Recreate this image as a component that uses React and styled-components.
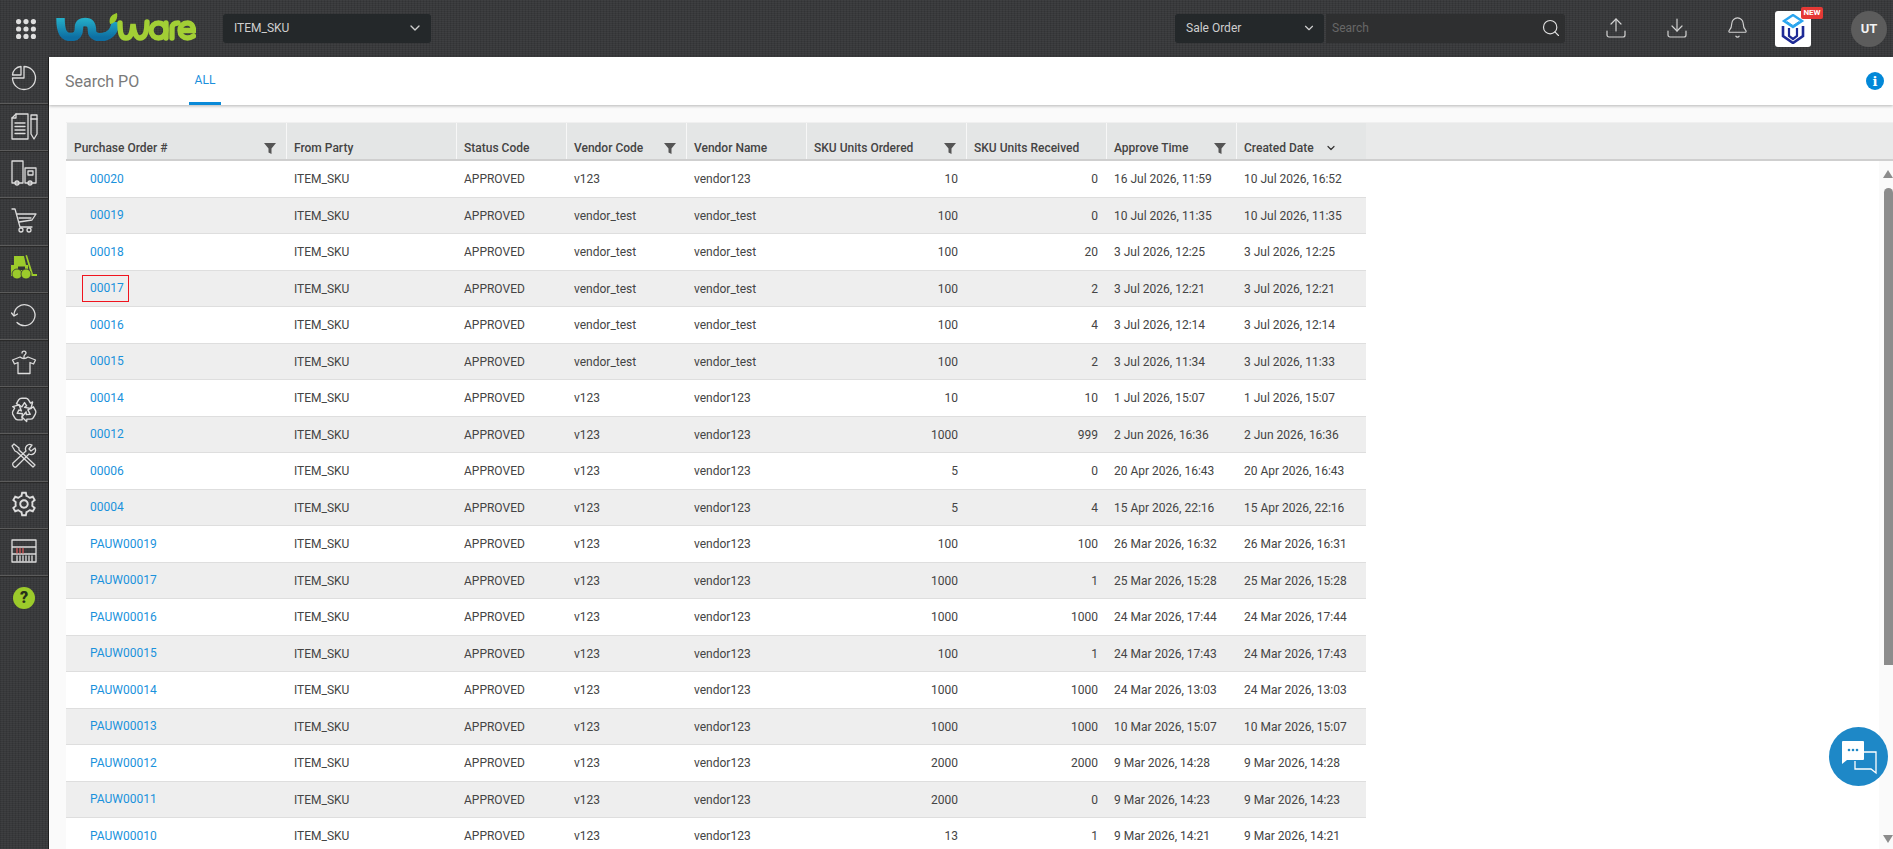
import React from 'react';
import styled, { createGlobalStyle } from 'styled-components';
import { Upload, Download, Bell, Search, ChevronDown } from 'lucide-react';
import { LiaCogSolid } from 'react-icons/lia';

const Global = createGlobalStyle`
  html, body { margin: 0; padding: 0; height: 100%; overflow: hidden; background: #fff; }
  * { box-sizing: border-box; }
  body { font-family: Roboto, "Liberation Sans", sans-serif; font-size: 12px; color: #444; }
`;

const texture = `
  background-color: #38393b;
  background-image:
    repeating-linear-gradient(0deg, rgba(255,255,255,.03) 0 1px, transparent 1px 2px),
    repeating-linear-gradient(90deg, rgba(0,0,0,.1) 0 1px, transparent 1px 3px);
`;

const Page = styled.div`
  width: 1893px; height: 849px; overflow: hidden;
  display: flex; flex-direction: column; position: relative;
`;
const TopBar = styled.header`
  ${texture}
  height: 57px; flex: none; display: flex; align-items: center; padding: 0 6px 0 16px;
`;
const AppsButton = styled.div` width: 20px; height: 20px; display: flex; margin-right: 20px; `;
const LogoWrap = styled.div` width: 140px; height: 28px; margin: 0 27px 3px 0; display: flex; `;
const Select = styled.div`
  height: 29px; background: #24282a; border-radius: 3px; color: #cfcfcf; margin-bottom: 1px;
  display: flex; align-items: center; justify-content: space-between;
  width: ${p => p.$w}px; padding: 0 8px 0 11px; font-size: 12px;
`;
const Spacer = styled.div` flex: 1; `;
const SearchBox = styled.div`
  width: 239px; height: 29px; margin: 0 20px 1px 2px; background: #2e2f30; border-radius: 0 3px 3px 0;
  display: flex; align-items: center; justify-content: space-between;
  padding: 0 4px 0 6px; color: #676767; font-size: 12px;
`;
const IconButton = styled.div`
  width: 61px; height: 40px; margin-bottom: 2px; display: flex; align-items: center; justify-content: center; color: #d2d2d2;
`;
const BrandTile = styled.div`
  width: 36px; height: 36px; margin-left: 7px; background: #fff; border-radius: 3px;
  position: relative; display: flex; align-items: center; justify-content: center;
`;
const NewBadge = styled.span`
  position: absolute; top: -4px; left: 26px; width: 22px; height: 12px; background: #e53935; border-radius: 2px;
  color: #fff; font-size: 8px; font-weight: 700; display: flex; align-items: center; justify-content: center;
`;
const Avatar = styled.div`
  width: 36px; height: 36px; margin-left: 40px; border-radius: 50%; background: #5c5c5c; color: #f2f2f2;
  font-size: 13px; font-weight: 700; display: flex; align-items: center; justify-content: center;
`;
const Body = styled.div` flex: 1; display: flex; min-height: 0; `;
const Sidebar = styled.nav`
  ${texture}
  width: 49px; flex: none; border-right: 1px solid #1f1f1f;
`;
const SideItem = styled.div`
  height: 47.2px; display: flex; align-items: center; justify-content: center; color: #dcdcdc; padding-bottom: 2px;
  & + & { border-top: 1px solid #5b5b5b; box-shadow: inset 0 1px 0 #2a2a2a; }
  &:first-child { height: 46px; padding-bottom: 5px; }
`;
const HelpDot = styled.span`
  width: 22px; height: 22px; border-radius: 50%; background: #9ccb2b; color: #26301a;
  font-size: 16px; font-weight: 900; display: flex; align-items: center; justify-content: center;
`;
const Main = styled.main` flex: 1; min-width: 0; display: flex; flex-direction: column; background: #fafafa; `;
const TabBar = styled.div`
  height: 48px; flex: none; background: #fff; display: flex; align-items: stretch; padding: 0 9px 0 16px;
  box-shadow: 0 1px 3px rgba(0,0,0,.28); position: relative;
`;
const PageTitle = styled.div`
  font-size: 16px; color: #7a7a7a; display: flex; align-items: center; width: 124px;
`;
const Tab = styled.div`
  width: 32px; display: flex; justify-content: center; align-items: center; padding-top: 1px;
  font-size: 12px; color: #1b8fdc; border-bottom: 3px solid #0a8ad8;
`;
const InfoDot = styled.div`
  margin-left: auto; align-self: center; width: 18px; height: 18px; border-radius: 50%; background: #0288d8;
  color: #fff; font-size: 13px; font-weight: 700; font-family: "DejaVu Serif", serif;
  display: flex; align-items: center; justify-content: center;
`;
const Content = styled.div` flex: 1; min-height: 0; padding-top: 17px; display: flex; flex-direction: column; `;
const HeadBand = styled.div`
  margin-left: 17px; height: 39px; flex: none; background: #e9eaea; border-top: 1px solid #f0f0f0;
  border-bottom: 2px solid #cfcfcf;
`;
const columns = '220px 170px 110px 120px 120px 160px 140px 130px 130px';
const HeadRow = styled.div` display: grid; grid-template-columns: ${columns}; width: 1300px; height: 100%; `;
const HeadCell = styled.div`
  background: #e4e6e6; border-left: 1.5px solid #f7f7f7; padding: 14px ${p => p.$right || 8}px 0 7px;
  display: flex; align-items: center; justify-content: ${p => p.$gap ? 'flex-start' : 'space-between'}; gap: ${p => p.$gap || 0}px;
  font-weight: 500; color: #444;
`;
const SortMark = styled(ChevronDown)` color: #333; `;
const BodyWrap = styled.div` flex: 1; min-height: 0; display: flex; background: #fff; margin-left: 17px; overflow: hidden; `;
const RowList = styled.div` flex: 1; min-width: 0; `;
const Row = styled.div`
  display: grid; grid-template-columns: ${columns}; width: 1300px; height: 36.5px; align-items: center; padding-top: 1px;
  background: ${p => p.$alt ? '#eeeeee' : '#fff'}; border-bottom: 1px solid #dedede; color: #444;
`;
const Cell = styled.div`
  padding: 0 8px; text-align: ${p => p.$num ? 'right' : 'left'}; white-space: nowrap;
`;
const LinkCell = styled.div` padding-left: 16px; display: flex; `;
const PoLink = styled.a`
  color: #1a92dc; height: 27px;
  padding: ${p => p.$boxed ? '0 4px 0 7px' : '0 8px'};
  line-height: ${p => p.$boxed ? '25px' : '27px'};
  border: ${p => p.$boxed ? '1px solid #f0141e' : '0'};
`;
const Rail = styled.div`
  width: 14px; flex: none; background: #fafafa; display: flex; flex-direction: column; align-items: flex-end;
  height: 688px; padding-top: 9px;
`;
const ArrowIcon = styled.svg` display: block; flex: none; margin-top: ${p => p.$top || 0}px; `;
const Thumb = styled.div` width: 9px; height: 477px; margin-top: 10px; background: #8c8c8c; border-radius: 5px 5px 0 0; flex: none; `;
const ChatBubble = styled.div`
  position: absolute; left: 1829px; top: 727px; width: 59px; height: 59px; border-radius: 50%; background: #1e88c7;
  display: flex; align-items: center; justify-content: center;
`;

const Grid = () => (
  <svg width="20" height="20" viewBox="0 0 20 20" fill="#dedede">
    {[2.6, 10, 17.4].flatMap(y => [2.6, 10, 17.4].map(x => <circle key={x + '-' + y} cx={x} cy={y} r="2.6" />))}
  </svg>
);
const Logo = () => (
  <svg width="140" height="28" viewBox="0 0 140 28" fill="none">
    <defs>
      <linearGradient id="lg" x1="0" y1="0" x2="0" y2="1">
        <stop offset="0" stopColor="#25b0c9" />
        <stop offset="1" stopColor="#0e6fa3" />
      </linearGradient>
    </defs>
    <path d="M4.500 5C4.500 20 8 24 15 24C22 24 23 19 23 14C23 10 26 9 29 9C35 9 36 13 36 18C36 23 42 25 47 24C54 23 58 19 60 9" stroke="url(#lg)" strokeWidth="8.500" />
    <path d="M54 11C52 4 57 1 61 0C62 5 60 10 54 11Z" fill="#9ccb2b" />
    <g stroke="#a2cf35" strokeWidth="5.400" strokeLinecap="round">
      <path d="M64 10C64 20 65 25 70 25C75 25 76 20 77 11C78 20 80 25 84 25C89 25 91 20 91 9" />
      <circle cx="102.500" cy="17.500" r="7.500" />
      <path d="M110 10V25" />
      <path d="M116 25V15C116 12 118 10 122 10" />
      <path d="M125 17.500H137.500C137.500 13 135 10 131.500 10C127 10 124 13 124 17.500C124 22 127 25 131.500 25C134 25 136 24 137.500 23" />
    </g>
  </svg>
);
const Brand = () => (
  <svg width="26" height="30" viewBox="0 0 26 30" fill="none">
    <path d="M13 1L22 7L13 13L4 7Z" stroke="#2ba5ef" strokeWidth="2.400" />
    <path d="M7 7.500L13 11.500L19 7.500" stroke="#2ba5ef" strokeWidth="1" />
    <path d="M3 12V22L13 29L23 22V12" stroke="#1e2a96" strokeWidth="2.600" />
    <path d="M9 14V22L13 25L17 22V14" stroke="#1e2a96" strokeWidth="2.200" />
  </svg>
);
const Funnel = () => (
  <svg width="12" height="12" viewBox="0 0 12 12" fill="#555"><path d="M0 1h12L7.500 6.500V12l-3-1.500v-4z" /></svg>
);

const stroke = { fill: 'none', stroke: 'currentColor', strokeWidth: 1.3, strokeLinejoin: 'round', strokeLinecap: 'round' };
const Pie = () => (
  <svg width="26" height="26" viewBox="0 0 26 26" {...stroke}>
    <path d="M13 1.500A11.500 11.500 0 1 1 1.500 13H13Z" />
    <path d="M10 1.500V10H1.500A9 9 0 0 1 10 1.500Z" />
  </svg>
);
const Docs = () => (
  <svg width="27" height="27" viewBox="0 0 27 27" {...stroke}>
    <path d="M5 1H17V26H1V5Z" /><path d="M5 1V5H1" /><path d="M4 10H14M4 13.500H14M4 17H14M4 20.500H14" />
    <path d="M20 2H26V21L23 26L20 21Z" /><path d="M20 6H26" />
  </svg>
);
const Truck = () => (
  <svg width="26" height="26" viewBox="0 0 26 26" {...stroke}>
    <path d="M1 1H12V23H1Z" /><path d="M14 8H25V23H14Z" /><path d="M17 11H22V15H17Z" />
    <circle cx="6" cy="23" r="2" /><circle cx="19" cy="23" r="2" />
  </svg>
);
const Cart = () => (
  <svg width="26" height="26" viewBox="0 0 26 26" {...stroke}>
    <path d="M1 2H4L9 20H21" /><path d="M6 7H25L21 13L8 15" /><path d="M8 11H20" /><circle cx="10" cy="23" r="2" /><circle cx="18" cy="23" r="2" />
  </svg>
);
const Forklift = () => (
  <svg width="26" height="25" viewBox="0 0 26 25" fill="#9ccb2b">
    <path d="M3 1H13L15 10H17V21H0V10H3Z" />
    <path d="M16 0L22 19H26V21H20.500L14.500 0.500Z" />
    <path d="M7 11.500H14V15H7Z" fill="#343536" />
    <circle cx="6" cy="19" r="5" stroke="#343536" strokeWidth=".8" /><circle cx="15" cy="19" r="5" stroke="#343536" strokeWidth=".8" />
  </svg>
);
const Returns = () => (
  <svg width="26" height="26" viewBox="0 0 26 26" {...stroke}>
    <path d="M3 13A10.500 10.500 0 1 1 6 20.500" />
    <path d="M0.500 11L3 14L6.500 12" />
  </svg>
);
const Hanger = () => (
  <svg width="26" height="26" viewBox="0 0 26 26" {...stroke}>
    <path d="M11 4C11 1.500 15 1.500 15 4C15 5.500 13 5.500 13 7.500V9" />
    <path d="M9 8L1.500 11L3.500 15L7 13.500V24.500H19V13.500L22.500 15L24.500 11L17 8Q13 11 9 8Z" />
  </svg>
);
const recycleArm = 'M8 4.500Q9 3 11 3H15Q16.500 3 17.500 5L19 7.500L21 6.500L19.500 12.500L13.500 11.500L15.500 10L13.500 7L11 11L6 8Z';
const RecycleMark = () => (
  <svg width="28" height="28" viewBox="0 0 26 26" {...stroke}>
    <path d={recycleArm} />
    <path d={recycleArm} transform="rotate(120 13 14)" />
    <path d={recycleArm} transform="rotate(240 13 14)" />
  </svg>
);
const Tools = () => (
  <svg width="26" height="26" viewBox="0 0 26 26" {...stroke}>
    <path d="M1 3L3 1L8 5L8 7L24 22L22 24L6 9L4 8Z" />
    <path d="M24 5L20 8L18 6L21 2C17 0 13 4 15 8L2 20C1 22 3 25 5 24L18 11C22 13 26 9 24 5Z" />
  </svg>
);
const Shelf = () => (
  <svg width="26" height="24" viewBox="0 0 26 24" {...stroke}>
    <path d="M1 1H25V23H1ZM1 8H25M1 15H25" />
    <path d="M6 9.500V14M9 9.500V14M12 9.500V14" stroke="#d85a5a" /><path d="M6 17V22M9 17V22M12 17V22M15 17V22M18 17V22M21 17V22" />
  </svg>
);
const Chat = () => (
  <svg width="40" height="38" viewBox="0 0 40 38" fill="none">
    <path d="M25 14H37V35L32 31H16V23" stroke="#fff" strokeWidth="1.300" />
    <path d="M4 3H24Q25 3 25 4V21Q25 22 24 22H8L3 26V4Q3 3 4 3Z" fill="#fff" />
    <circle cx="10" cy="12" r="1.300" fill="#1e88c7" /><circle cx="14" cy="12" r="1.300" fill="#1e88c7" /><circle cx="18" cy="12" r="1.300" fill="#1e88c7" />
  </svg>
);

const d = (a, b) => [a, b];
const rows = [
  ['00020', 'v123', 'vendor123', 10, 0, ...d('16 Jul 2026, 11:59', '10 Jul 2026, 16:52')],
  ['00019', 'vendor_test', 'vendor_test', 100, 0, ...d('10 Jul 2026, 11:35', '10 Jul 2026, 11:35')],
  ['00018', 'vendor_test', 'vendor_test', 100, 20, ...d('3 Jul 2026, 12:25', '3 Jul 2026, 12:25')],
  ['00017', 'vendor_test', 'vendor_test', 100, 2, ...d('3 Jul 2026, 12:21', '3 Jul 2026, 12:21')],
  ['00016', 'vendor_test', 'vendor_test', 100, 4, ...d('3 Jul 2026, 12:14', '3 Jul 2026, 12:14')],
  ['00015', 'vendor_test', 'vendor_test', 100, 2, ...d('3 Jul 2026, 11:34', '3 Jul 2026, 11:33')],
  ['00014', 'v123', 'vendor123', 10, 10, ...d('1 Jul 2026, 15:07', '1 Jul 2026, 15:07')],
  ['00012', 'v123', 'vendor123', 1000, 999, ...d('2 Jun 2026, 16:36', '2 Jun 2026, 16:36')],
  ['00006', 'v123', 'vendor123', 5, 0, ...d('20 Apr 2026, 16:43', '20 Apr 2026, 16:43')],
  ['00004', 'v123', 'vendor123', 5, 4, ...d('15 Apr 2026, 22:16', '15 Apr 2026, 22:16')],
  ['PAUW00019', 'v123', 'vendor123', 100, 100, ...d('26 Mar 2026, 16:32', '26 Mar 2026, 16:31')],
  ['PAUW00017', 'v123', 'vendor123', 1000, 1, ...d('25 Mar 2026, 15:28', '25 Mar 2026, 15:28')],
  ['PAUW00016', 'v123', 'vendor123', 1000, 1000, ...d('24 Mar 2026, 17:44', '24 Mar 2026, 17:44')],
  ['PAUW00015', 'v123', 'vendor123', 100, 1, ...d('24 Mar 2026, 17:43', '24 Mar 2026, 17:43')],
  ['PAUW00014', 'v123', 'vendor123', 1000, 1000, ...d('24 Mar 2026, 13:03', '24 Mar 2026, 13:03')],
  ['PAUW00013', 'v123', 'vendor123', 1000, 1000, ...d('10 Mar 2026, 15:07', '10 Mar 2026, 15:07')],
  ['PAUW00012', 'v123', 'vendor123', 2000, 2000, ...d('9 Mar 2026, 14:28', '9 Mar 2026, 14:28')],
  ['PAUW00011', 'v123', 'vendor123', 2000, 0, ...d('9 Mar 2026, 14:23', '9 Mar 2026, 14:23')],
  ['PAUW00010', 'v123', 'vendor123', 13, 1, ...d('9 Mar 2026, 14:21', '9 Mar 2026, 14:21')],
];

const sideIcons = [
  <Pie />, <Docs />, <Truck />, <Cart />, <Forklift />,
  <Returns />, <Hanger />, <RecycleMark />, <Tools />,
  <LiaCogSolid size={30} />, <Shelf />, <HelpDot>?</HelpDot>,
];

export default function App() {
  return (
    <Page>
      <Global />
      <TopBar>
        <AppsButton><Grid /></AppsButton>
        <LogoWrap><Logo /></LogoWrap>
        <Select $w={208}>ITEM_SKU<ChevronDown size={16} /></Select>
        <Spacer />
        <Select $w={149}>Sale Order<ChevronDown size={14} /></Select>
        <SearchBox>Search<Search size={20} color="#e0e0e0" strokeWidth={1.4} /></SearchBox>
        <IconButton><Upload size={24} strokeWidth={1.2} /></IconButton>
        <IconButton><Download size={24} strokeWidth={1.2} /></IconButton>
        <IconButton><Bell size={23} strokeWidth={1.2} /></IconButton>
        <BrandTile><Brand /><NewBadge>NEW</NewBadge></BrandTile>
        <Avatar>UT</Avatar>
      </TopBar>
      <Body>
        <Sidebar>
          {sideIcons.map((icon, i) => <SideItem key={i}>{icon}</SideItem>)}
        </Sidebar>
        <Main>
          <TabBar>
            <PageTitle>Search PO</PageTitle>
            <Tab>ALL</Tab>
            <InfoDot>i</InfoDot>
          </TabBar>
          <Content>
            <HeadBand>
              <HeadRow>
                <HeadCell $right={10}>Purchase Order #<Funnel /></HeadCell>
                <HeadCell>From Party</HeadCell>
                <HeadCell>Status Code</HeadCell>
                <HeadCell $right={10}>Vendor Code<Funnel /></HeadCell>
                <HeadCell>Vendor Name</HeadCell>
                <HeadCell $right={10}>SKU Units Ordered<Funnel /></HeadCell>
                <HeadCell>SKU Units Received</HeadCell>
                <HeadCell $right={10}>Approve Time<Funnel /></HeadCell>
                <HeadCell $gap={11}>Created Date<SortMark size={12} strokeWidth={2.4} /></HeadCell>
              </HeadRow>
            </HeadBand>
            <BodyWrap>
              <RowList>
                {rows.map((r, i) => (
                  <Row key={r[0]} $alt={i % 2 === 1}>
                    <LinkCell><PoLink $boxed={r[0] === '00017'}>{r[0]}</PoLink></LinkCell>
                    <Cell>ITEM_SKU</Cell>
                    <Cell>APPROVED</Cell>
                    <Cell>{r[1]}</Cell>
                    <Cell>{r[2]}</Cell>
                    <Cell $num>{r[3]}</Cell>
                    <Cell $num>{r[4]}</Cell>
                    <Cell>{r[5]}</Cell>
                    <Cell>{r[6]}</Cell>
                  </Row>
                ))}
              </RowList>
              <Rail>
                <ArrowIcon width="10" height="8" viewBox="0 0 10 8" fill="#8c8c8c"><path d="M5 0L10 8H0Z" /></ArrowIcon>
                <Thumb />
                <ArrowIcon $top={170} width="10" height="8" viewBox="0 0 10 8" fill="#8c8c8c"><path d="M0 0H10L5 8Z" /></ArrowIcon>
              </Rail>
            </BodyWrap>
          </Content>
        </Main>
      </Body>
      <ChatBubble><Chat /></ChatBubble>
    </Page>
  );
}
